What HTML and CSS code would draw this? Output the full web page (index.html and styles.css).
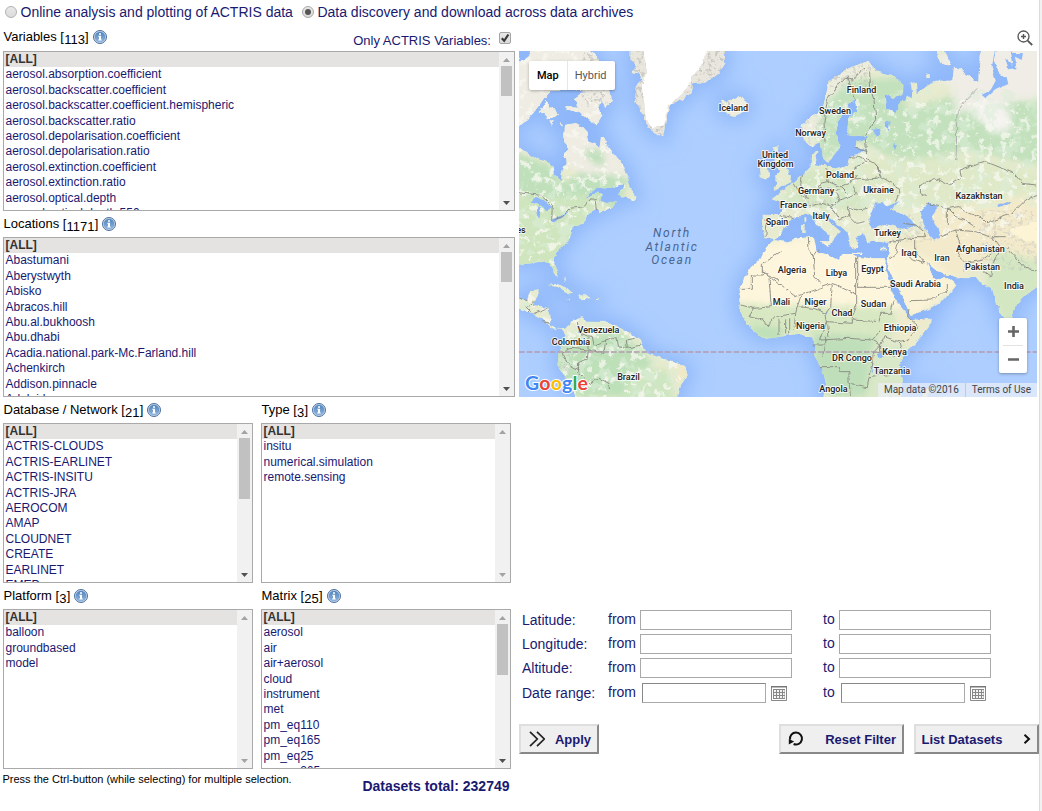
FILE: index.html
```html
<!DOCTYPE html>
<html lang="en">
<head>
<meta charset="utf-8">
<title>ACTRIS Data Portal</title>
<link rel="stylesheet" href="styles.css">
</head>
<body>
<svg class="defs" width="0" height="0" aria-hidden="true">
  <defs>
    <linearGradient id="infoFill" x1="0" y1="0" x2="0" y2="1"><stop offset="0" stop-color="#4f84bd"/><stop offset="1" stop-color="#8fb5df"/></linearGradient>
    <linearGradient id="ctl" x1="0" y1="0" x2="0" y2="1"><stop offset="0" stop-color="#e9e9e9"/><stop offset="1" stop-color="#dadada"/></linearGradient>
    <symbol id="info" viewBox="0 0 14 14">
      <circle cx="7" cy="7" r="6.5" fill="#c7d6e8" stroke="#4b6f9d" stroke-width="1"/>
      <circle cx="7" cy="7" r="5.3" fill="url(#infoFill)"/>
      <path d="M6 3.2h2v1.6H6zM5.3 5.8H8v3.8h.8v1H5.2v-1H6V6.8h-.7z" fill="#fff"/>
    </symbol>
    <symbol id="calendar" viewBox="0 0 16 15">
      <path d="M.5.5h15v14H.5z" fill="#fff" stroke="#888"/>
      <path d="M0 0h16v1.5H0z" fill="#777"/>
      <path d="M2 3h12v10H2z" fill="#888"/>
      <path d="M3 4h2v2H3zm3 0h2v2H6zm3 0h2v2H9zm3 0h1.6v2H12zM3 7h2v2H3zm3 0h2v2H6zm3 0h2v2H9zm3 0h1.6v2H12zM3 10h2v2H3zm3 0h2v2H6zm3 0h2v2H9zm3 0h1.6v2H12z" fill="#f4f4f4"/>
    </symbol>
  </defs>
</svg>
<main class="portal">
  <header class="modes">
    <label class="mode"><svg class="radio" viewBox="0 0 12 12"><circle cx="6" cy="6" r="5.5" fill="url(#ctl)" stroke="#b2b2b2"/></svg>Online analysis and plotting of ACTRIS data</label>
    <label class="mode"><svg class="radio" viewBox="0 0 12 12"><circle cx="6" cy="6" r="5.5" fill="url(#ctl)" stroke="#a8a8a8"/><circle cx="6" cy="6" r="3" fill="#555"/></svg>Data discovery and download across data archives</label>
  </header>

  <div class="columns">
    <div class="filters">
      <section class="filter wide">
        <div class="head first"><h2>Variables [<span class="count">113</span>]</h2><svg class="info"><use href="#info"/></svg>
          <label class="only">Only ACTRIS Variables:<svg class="check" viewBox="0 0 12 12"><rect x=".5" y=".5" width="11" height="11" rx="1.5" fill="url(#ctl)" stroke="#a5a5a5"/><path d="M2.8 6.2l2.4 2.6 4.2-6.3" fill="none" stroke="#3a3a3a" stroke-width="2.2"/></svg></label>
        </div>
        <div class="list">
          <ul><li class="all">[ALL]</li><li>aerosol.absorption.coefficient</li><li>aerosol.backscatter.coefficient</li><li>aerosol.backscatter.coefficient.hemispheric</li><li>aerosol.backscatter.ratio</li><li>aerosol.depolarisation.coefficient</li><li>aerosol.depolarisation.ratio</li><li>aerosol.extinction.coefficient</li><li>aerosol.extinction.ratio</li><li>aerosol.optical.depth</li><li>aerosol.optical.depth.550</li></ul>
          <div class="bar"><i class="up"></i><i class="thumb t30"></i><i class="down on"></i></div>
        </div>
      </section>
      <section class="filter wide">
        <div class="head"><h2>Locations [<span class="count">1171</span>]</h2><svg class="info"><use href="#info"/></svg></div>
        <div class="list">
          <ul><li class="all">[ALL]</li><li>Abastumani</li><li>Aberystwyth</li><li>Abisko</li><li>Abracos.hill</li><li>Abu.al.bukhoosh</li><li>Abu.dhabi</li><li>Acadia.national.park-Mc.Farland.hill</li><li>Achenkirch</li><li>Addison.pinnacle</li><li>Adelaide</li></ul>
          <div class="bar"><i class="up"></i><i class="thumb t30"></i><i class="down on"></i></div>
        </div>
      </section>
      <section class="filter">
        <div class="head"><h2>Database / Network [<span class="count">21</span>]</h2><svg class="info"><use href="#info"/></svg></div>
        <div class="list">
          <ul><li class="all">[ALL]</li><li>ACTRIS-CLOUDS</li><li>ACTRIS-EARLINET</li><li>ACTRIS-INSITU</li><li>ACTRIS-JRA</li><li>AEROCOM</li><li>AMAP</li><li>CLOUDNET</li><li>CREATE</li><li>EARLINET</li><li>EMEP</li></ul>
          <div class="bar"><i class="up"></i><i class="thumb t60"></i><i class="down on"></i></div>
        </div>
      </section>
      <section class="filter">
        <div class="head"><h2>Type [<span class="count">3</span>]</h2><svg class="info"><use href="#info"/></svg></div>
        <div class="list">
          <ul><li class="all">[ALL]</li><li>insitu</li><li>numerical.simulation</li><li>remote.sensing</li></ul>
          <div class="bar"><i class="up"></i><i class="down"></i></div>
        </div>
      </section>
      <section class="filter">
        <div class="head"><h2>Platform [<span class="count">3</span>]</h2><svg class="info"><use href="#info"/></svg></div>
        <div class="list">
          <ul><li class="all">[ALL]</li><li>balloon</li><li>groundbased</li><li>model</li></ul>
          <div class="bar"><i class="up"></i><i class="down"></i></div>
        </div>
      </section>
      <section class="filter">
        <div class="head"><h2>Matrix [<span class="count">25</span>]</h2><svg class="info"><use href="#info"/></svg></div>
        <div class="list">
          <ul><li class="all">[ALL]</li><li>aerosol</li><li>air</li><li>air+aerosol</li><li>cloud</li><li>instrument</li><li>met</li><li>pm_eq110</li><li>pm_eq165</li><li>pm_eq25</li><li>pm_eq265</li></ul>
          <div class="bar"><i class="up"></i><i class="thumb t51"></i><i class="down on"></i></div>
        </div>
      </section>
      <footer class="foot"><p class="hint">Press the Ctrl-button (while selecting) for multiple selection.</p><p class="total">Datasets total: 232749</p></footer>
    </div>

    <div class="side">
      <div class="tools"><svg class="magnify" viewBox="0 0 16 16" fill="none" stroke="#555"><circle cx="6.5" cy="6.5" r="5.5" stroke-width="1.3"/><path d="M10.6 10.6l4.6 4.4" stroke-width="1.8"/><path d="M6.5 4v5M4 6.5h5" stroke-width="1.4"/></svg></div>
      <div class="map">
        <svg class="world" viewBox="0 3 1554 1038">
          <defs>
            <filter id="soft" x="-10%" y="-10%" width="120%" height="120%"><feGaussianBlur stdDeviation="30"/></filter>
            <filter id="blend" x="-20%" y="-20%" width="140%" height="140%"><feGaussianBlur stdDeviation="9"/></filter>
            <filter id="rough" x="-5%" y="-5%" width="110%" height="110%"><feTurbulence type="fractalNoise" baseFrequency=".045" numOctaves="3" seed="4"/><feDisplacementMap in="SourceGraphic" scale="14" xChannelSelector="R" yChannelSelector="G"/></filter>
            <filter id="speck" x="0" y="0" width="100%" height="100%"><feTurbulence type="fractalNoise" baseFrequency=".045" numOctaves="4" seed="11"/><feColorMatrix values="0 0 0 0 .94  0 0 0 0 .95  0 0 0 0 .88  9 0 0 0 -5.1"/></filter>
            <filter id="wood" x="0" y="0" width="100%" height="100%"><feTurbulence type="fractalNoise" baseFrequency=".025" numOctaves="4" seed="7"/><feColorMatrix values="0 0 0 0 .7  0 0 0 0 .85  0 0 0 0 .68  8 0 0 0 -4.2"/></filter>
            <filter id="rock" x="0" y="0" width="100%" height="100%"><feTurbulence type="fractalNoise" baseFrequency=".09" numOctaves="3" seed="3"/><feColorMatrix values="0 0 0 0 .55  0 0 0 0 .54  0 0 0 0 .51  7 0 0 0 -3.7"/></filter>
            <path id="shapes" d="M-20-20H195L235 25 250 50 252 90 275 125 279 155 262 170 248 148 200 125 150 118 100 120 75 145 55 175 22 212-20 245Z
              M165 145L190 128 225 125 250 155 235 172 250 195 232 226 205 207 180 188 140 178 140 168 180 170ZM62 187L80 150 92 174 112 180 120 195 102 202 88 208 75 193ZM92 213l12-3-6 14zM118 220l14 5-8 6z
              M138 225L170 219 190 229 205 245 211 275 226 283 241 297 246 262 255 259 266 290 290 320 315 350 328 380 320 400 290 408 272 413 238 410 212 430 200 447 235 428 248 433 244 455 262 462 290 454 285 468 260 480 240 490 236 475 208 490 200 511 190 521 160 532 155 560 140 580 110 610 105 640 118 670 115 683 104 668 92 640 70 632 40 640-20 645V280L15 300 50 325 90 338 103 350 108 375 125 390 130 362 140 340 135 310 149 300 135 270ZM300 432L325 388 332 412 353 440 347 452 328 445 307 442Z
              M-20 745L25 751 34 721 60 718 50 746 40 768 88 774 95 800 92 826 112 838 142 832 165 811 190 801 198 815 265 816 302 831 360 866 376 901 430 926 498 948 506 976 482 1011 468 1060H172L152 1000 115 945 124 896 143 858 130 839 98 838 70 806 30 786-20 768ZM85 705L115 702 150 716 166 731 140 728 112 710ZM180 733L200 733 215 745 186 748ZM142 746h11v4h-11zM231 744h10v4h-10zM135 685l6 3-2 6z
              M335-10H612L619 40 600 70 560 95 520 100 515 130 490 150 455 160 440 210 432 262 410 250 385 232 375 195 348 150 350 110 370 90 360 70 338 66 352 50 335 30ZM603 180L610 143 622 158 640 150 668 139 688 165 682 184 646 200 620 190Z
              M722 385L720 355 745 345 751 378 735 390ZM764 292L779 288 775 315 792 328 802 355 816 378 812 398 790 410 764 424 775 395 768 377 780 362 768 340Z
              M848 225L880 198 910 180 922 130 930 95 968 65 1010 45 1050 33 1070 64 1120 75 1153 105 1152 132 1122 146 1096 130 1100 172 1130 190 1140 166 1165 137 1182 145 1175 100 1194 95 1196 130 1220 110 1250 92 1300 92 1305 50 1325 60 1378 97 1382 20 1395-20H1580V705L1554 711 1520 736 1490 766 1480 801 1470 846 1450 801 1430 756 1420 718 1390 706 1370 681 1310 682 1280 672 1250 660 1222 637 1242 684 1262 688 1280 680 1312 706 1280 748 1230 776 1175 798 1168 785 1150 741 1130 706 1117 676 1105 650 1112 576 1100 578 1062 572 1045 580 1035 553 1010 560 1018 590 1002 597 988 570 982 545 960 525 928 498 908 492 932 516 966 545 953 555 942 576 930 582 932 556 898 526 872 492 825 503 798 532 790 555 765 570 738 564 730 538 728 494 783 495 790 460 758 448 780 430 825 395 850 375 875 350 876 310 895 305 890 343 950 355 985 345 990 320 1045 300 1010 294 1012 275 1048 262 985 252 988 205 1015 182 1008 152 984 158 990 180 960 205 950 250 965 285 945 312 928 338 912 322 905 276 880 290 855 270Z
              M745 586L765 570 800 575 840 565 885 560 893 605 930 615 960 630 968 612 1000 612 1015 621 1055 625 1100 625 1098 656 1113 706 1130 751 1163 791 1175 811 1238 803 1236 818 1200 866 1155 916 1140 946 1150 1000 1142 1060H910L920 996 910 956 885 916 890 890 880 866 840 851 780 861 740 866 700 841 680 816 660 781 665 746 659 721 690 661 725 626Z
              M905 574h28l-5 17zM1000 608h30v4h-30zM1086 596h16v5h-16zM848 525h12v24h-10zM853 505h6v12h-6zM1465 18l-18 8zM1245-10h26l12 30 15 15-5 13-28-8-8-18zM1222 70h10v14h-10zM1216 1020l12-5-3 26h-12z"/>
            <clipPath id="land"><use href="#shapes"/></clipPath>
          </defs>
          <rect y="0" width="1554" height="1045" fill="#adceff"/>
          <use href="#shapes" filter="url(#soft)" fill="#8db6f9" stroke="#8db6f9" stroke-width="34"/>
          <g filter="url(#rough)">
            <use href="#shapes" fill="#e7ebcf"/>
            <g clip-path="url(#land)">
              <g filter="url(#blend)">
                <path d="M-20-20H290V300L330 380 210 400 130 330-20 290Z" fill="#efece3"/>
                <path d="M-20 300L100 350 130 400 180 370 330 380 300 480 190 440 90 470-20 420ZM190 300L250 300 260 350 220 340Z" fill="#bfe0bb"/>
                <path d="M-20 440L250 440 200 520 110 680-20 650Z" fill="#cfe5be"/>
                <path d="M130 870L300 840 400 930 350 1041 150 1041 110 930Z" fill="#bde0b9"/>
                <path d="M430 930L510 940 500 990 440 1000Z" fill="#f1e8c6"/>
                <path d="M350 950L450 960 470 1060 300 1060Z" fill="#cee6c2"/>
                <path d="M600 130H700V210H600Z" fill="#eeedde"/>
                <path d="M840 220L930 60 1060 20 1070 50 960 120 880 300Z" fill="#ededde"/>
                <path d="M900 180L990 90 1160 80 1160 180 1330 130 1580 160 1580 350 1350 300 1150 340 1020 270 900 340Z" fill="#c2e1bc"/>
                <path d="M1170 50L1380-20H1580V140L1400 170 1310 190 1300 110Z" fill="#efede5"/>
                <path d="M1350 180L1400 140 1470 180 1480 240 1420 250Z" fill="#f4f3ef"/>
                <path d="M1000 330L1350 320 1580 370 1560 450 1300 480 1050 460Z" fill="#dfe9c8"/>
                <path d="M840 360L1000 360 1050 480 900 480 780 460Z" fill="#d5e6c3"/>
                <path d="M1230 480L1580 430 1580 640 1400 640 1300 690 1230 640 1130 570 1250 540Z" fill="#f2eacb"/>
                <path d="M1420 590L1580 640 1580 720 1470 860 1400 700Z" fill="#d4e7c3"/>
                <path d="M1090 560L1250 640 1320 700 1180 810 1100 660Z" fill="#fbf3d7"/>
                <path d="M650 590L880 560 1120 620 1150 780 960 770 650 760Z" fill="#fdf5dc"/>
                <path d="M650 760L1120 770 1140 860 880 850 650 850Z" fill="#d8e8c3"/>
                <path d="M1140 790L1250 800 1170 900 1120 850Z" fill="#eeebcd"/>
                <path d="M880 850L1080 860 1070 960 1040 1041 930 1041 880 920Z" fill="#bfdfba"/>
                <path d="M1060 880L1160 880 1160 1050 1040 1050Z" fill="#d9e8c8"/>
                <path d="M700 820L800 840 780 880 700 860Z" fill="#bfe0b8"/>
              </g>
              <rect y="380" width="620" height="665" filter="url(#wood)" opacity=".6"/>
              <rect x="780" y="120" width="780" height="360" filter="url(#wood)" opacity=".55"/>
              <rect width="600" height="1045" filter="url(#speck)" opacity=".75"/>
              <rect x="780" y="150" width="774" height="420" filter="url(#speck)" opacity=".7"/>
              <path d="M330-10H630V65L520 120 495 155 455 165 440 265 410 255 380 235 330 150Z" fill="#e9e6dd"/>
              <path d="M330-10H630V65L520 120 495 155 455 165 440 265 410 255 380 235 330 150Z" filter="url(#rock)" opacity=".8"/>
              <path d="M370-10H562L552 40 520 80 508 112 480 140 450 165 432 225 397 236 380 200 375 150 368 110 384 60Z" fill="#fff"/>
              <rect x="190" y="3" width="90" height="165" filter="url(#rock)" opacity=".7"/>
              <rect x="915" y="35" width="150" height="75" filter="url(#rock)" opacity=".6"/>
              <rect x="850" y="110" width="70" height="175" filter="url(#rock)" opacity=".35"/>
              <rect x="120" y="850" width="32" height="190" filter="url(#rock)" opacity=".6"/>
              <rect x="1380" y="480" width="174" height="180" filter="url(#rock)" opacity=".45"/>
              <rect x="1120" y="495" width="120" height="80" filter="url(#rock)" opacity=".35"/>
              <rect x="865" y="450" width="85" height="25" filter="url(#rock)" opacity=".5"/>
              <path d="M1470 540L1554 515V580L1500 565Z" fill="#fdf4d5"/>
            </g>
            <g fill="#8fb8fa">
              <path d="M1048 508L1070 458 1090 456 1102 470 1142 453 1112 482 1140 488 1172 505 1192 528 1150 536 1100 522 1060 538Z"/>
              <path d="M1205 482L1232 455 1258 472 1238 500 1255 530 1262 562 1245 572 1225 550 1212 515Z"/>
              <path d="M1430-10H1436L1425 25 1442 78 1462 78 1468 102 1430 120 1400 145 1388 135 1415 120 1430 92 1418 50ZM1458 25L1480 45 1473 8 1512 10 1508 30 1488 20 1492 55 1470 58Z"/>
              <path d="M1062 240L1080 233 1084 250 1070 260ZM1100 215l12 3-2 25-8-8zM1124 278l10 8-6 10-6-8z"/>
              <path d="M50 440L80 455 100 475 85 480 55 460 35 455ZM55 470L65 470 62 505 52 498ZM95 510L130 495 150 485 132 502 102 518ZM200 445l40-35-10 20z"/>
              <path d="M1075 912l14-4 5 14-12 6zM1057 945l6 22-5-5zM1435 465l30-12 10 4-35 14zM918 785l8 2-3 6z"/>
              <path d="M0 0H35L30 18 12 32 0 34Z"/>
            </g>
            <g class="borders">
              <path d="M0 428L65 436 100 468 98 512 130 500 155 475 195 470 215 447 228 447 232 480"/>
              <path d="M918 275L915 215 925 150 955 105 980 85 1000 90 1035 55 1052 65 1055 120 1065 150 1070 205 1055 235 1040 258M984 80L1000 120 1010 155M1040 265L1043 325 1075 345 1083 380 1070 385 1005 390M1010 294L1045 305M990 320L1020 322 1043 335 1005 355M850 375L845 405 860 440M920 355L928 395 965 410 1005 390 1015 375M928 395L905 400 895 415 960 420M825 400L850 440 870 445M870 468L910 460 935 468 960 450 950 430M960 450L990 440 1015 430 1000 405M935 468L960 510 990 500 985 470 1015 480 1045 475M990 500L1010 520 1040 515M785 500L825 505M735 510L745 512 740 560M965 410L985 430M1075 345L1085 380 1145 415 1140 430 1130 455"/>
              <path d="M1220 440L1204 430 1205 405 1250 385 1290 405 1325 385 1320 360 1400 335 1450 355 1480 365 1510 400 1554 405M1225 460L1285 475M1285 525V475L1320 470 1350 490 1390 505 1405 520 1480 490 1520 450 1554 435M1285 475L1310 500 1340 510 1370 530M1260 560L1310 540 1370 545 1410 560M1310 540L1325 590 1320 620 1340 640 1335 665M1340 640L1390 630 1440 590 1420 560 1460 560M1395 665L1415 680 1420 640 1440 605 1470 590M1470 600L1520 655 1554 660M1150 520L1190 525 1215 545 1220 560 1190 560 1190 600 1215 640M1110 576L1140 570 1185 565M1140 572L1130 610 1110 625M1150 598L1180 630 1215 640M1172 752L1240 750 1255 735 1285 720 1285 705"/>
              <path d="M1315 185C1310 240 1315 290 1310 330M1315 185L1340 150 1375 115" stroke="#aaa"/>
              <path d="M665 718H697V675H730V665L830 740 940 700 955 705 1010 732V622M730 665V640L785 605M730 665L780 690M750 685L757 770 705 775M1016 621V712H1120M883 620L887 680 905 700M868 560L870 600 883 620 900 598M940 700L935 770 920 790M1010 732V775L1000 800M665 765L705 775 690 800 730 810 745 830 770 800 830 790 835 770 885 775 920 790 925 815 1000 820 1000 800M835 770L845 740M780 805V855M800 805V850M812 805V850M830 790L825 840M925 815L905 870 990 865 1060 870 1085 840M1000 810L1080 815 1085 790 1115 790 1125 750M925 815L930 860M1060 870L1085 885 1095 860 1140 875 1165 870 1200 830 1165 800 1170 780M1140 875L1150 915M1085 885V905M1060 905H1085M1058 940L1065 905 1085 885M1085 905L1130 920M900 950H960L965 965H990V1000L1045 1010 1050 980 1085 975M1060 935L1050 975M990 1000L995 1041M1075 960L1100 975 1145 970M880 885H920V860M920 885L910 920"/>
              <path d="M175 815L180 850 220 860 225 885 260 870 255 910 210 900V860M260 870L290 860 295 890 325 895 322 870 350 865M325 895L365 885M208 900L205 925 175 940 180 960 145 940 130 910 155 895 208 900M175 940L180 970 215 1000 240 985 270 1000 275 1020M0 745L25 752M25 770L45 755M45 790L85 775M70 815L92 820M20 770L35 785"/>
            </g>
          </g>
          <path d="M0 906H1554" stroke="#b49bb0" stroke-width="4.5" stroke-dasharray="17 6"/>
        </svg>
        <svg class="names" viewBox="519 51 518 346">
          <text x="733.5" y="110.5">Iceland</text><text x="861.5" y="92.5">Finland</text><text x="835" y="113.5">Sweden</text><text x="810.5" y="135.5">Norway</text><text x="775" y="157.5">United</text><text x="775.5" y="166.5">Kingdom</text><text x="840" y="177.5">Poland</text><text x="816" y="193.5">Germany</text><text x="878.5" y="192.5">Ukraine</text><text x="979" y="198.5">Kazakhstan</text><text x="793.5" y="207.5">France</text><text x="821" y="218.5">Italy</text><text x="777" y="224.5">Spain</text><text x="887.5" y="235.5">Turkey</text><text x="909" y="255.5">Iraq</text><text x="942" y="260.5">Iran</text><text x="980.5" y="251.5">Afghanistan</text><text x="982.5" y="269.5">Pakistan</text><text x="1014" y="288.5">India</text><text x="915.5" y="286.5">Saudi Arabia</text><text x="872.5" y="271.5">Egypt</text><text x="836.5" y="275.5">Libya</text><text x="792" y="272.5">Algeria</text><text x="781.5" y="304.5">Mali</text><text x="815.5" y="304.5">Niger</text><text x="873.5" y="306.5">Sudan</text><text x="842" y="315.5">Chad</text><text x="810.5" y="328.5">Nigeria</text><text x="900" y="330.5">Ethiopia</text><text x="894.5" y="354.5">Kenya</text><text x="852" y="360.5">DR Congo</text><text x="892" y="373.5">Tanzania</text><text x="833.5" y="391.5">Angola</text><text x="598.5" y="332.5">Venezuela</text><text x="571" y="344.5">Colombia</text><text x="628.5" y="379.5">Brazil</text><text x="521" y="232.5">es</text>
          <g class="sea"><text x="672" y="237">North</text><text x="672" y="251">Atlantic</text><text x="672" y="264">Ocean</text></g>
        </svg>
        <div class="types"><span class="picked">Map</span><span>Hybrid</span></div>
        <div class="zoomer"><svg viewBox="0 0 28 55"><path d="M9 13.5h11M14.5 8v11M9 41.5h11" stroke="#666" stroke-width="2.6"/><path d="M4 27.5h20" stroke="#e2e2e2"/></svg></div>
        <div class="brand"><span class="b">G</span><span class="r">o</span><span class="y">o</span><span class="b">g</span><span class="g">l</span><span class="r">e</span></div>
        <div class="credit"><span>Map data ©2016</span><span>Terms of Use</span></div>
      </div>

      <form class="ranges">
        <div class="row"><span class="name">Latitude:</span><span class="from">from</span><input><span class="to">to</span><input></div>
        <div class="row"><span class="name">Longitude:</span><span class="from">from</span><input><span class="to">to</span><input></div>
        <div class="row"><span class="name">Altitude:</span><span class="from">from</span><input><span class="to">to</span><input></div>
        <div class="row dates"><span class="name">Date range:</span><span class="from">from</span><span class="pick"><input><svg><use href="#calendar"/></svg></span><span class="to">to</span><span class="pick"><input><svg><use href="#calendar"/></svg></span></div>
      </form>
      <div class="actions">
        <button class="apply"><svg viewBox="0 0 16 16" width="16" height="16"><path d="M1 .8l7.3 7.2L1 15.2M8 .8l7.3 7.2L8 15.2" fill="none" stroke="#222" stroke-width="1.7"/></svg>Apply</button>
        <button class="reset"><svg viewBox="0 0 16 16" width="16" height="16"><path d="M2.1 8.6A6 6 0 1 1 5.6 13" fill="none" stroke="#111" stroke-width="2"/><path d="M.8 8V13.6L6.2 10.6Z" fill="#111"/></svg>Reset Filter</button>
        <button class="datasets">List Datasets<svg viewBox="0 0 8 10" width="8" height="10"><path d="M1.5.8L6 5 1.5 9.2" fill="none" stroke="#111" stroke-width="2"/></svg></button>
      </div>
    </div>
  </div>
</main>
</body>
</html>
```

FILE: styles.css
```css
* { box-sizing: border-box; }
body { margin: 0; background: #f1f1f1; font-family: "Liberation Sans", Arial, sans-serif; color: #191970; overflow: hidden; }
.defs { display: block; height: 0; }
.portal { width: 1040px; height: 811px; background: #fff; border-right: 1px solid #dcdcdc; }
h2, p, ul { margin: 0; padding: 0; list-style: none; font-weight: normal; }
.modes { display: flex; gap: 9px; height: 24px; margin-bottom: 1px; padding-left: 5px; font-size: 14px; }
.mode { display: flex; align-items: center; gap: 3.5px; white-space: nowrap; }
.radio { width: 12px; height: 12px; }
.columns { display: flex; }
.filters { width: 519px; padding-left: 3px; display: grid; grid-template-columns: 250px 250px; column-gap: 8px; align-content: start; }
.filter { display: flex; flex-direction: column; }
.wide { grid-column: 1 / 3; width: 512px; }
.head { display: flex; height: 26px; align-items: flex-start; gap: 4px; padding-top: 5px; color: #000; }
.head.first { padding-top: 4px; }
.head h2 { font-size: 13px; line-height: 16px; white-space: nowrap; padding-left: .5px; }
.count { vertical-align: -3px; line-height: 0; margin: 0 .2px; }
.info { width: 14px; height: 14px; margin-top: 1px; }
.only { margin-left: auto; display: flex; gap: 8px; font-size: 13px; line-height: 16px; color: #191970; padding: 4px 4px 0 0; }
.check { width: 12px; height: 12px; margin-top: -1px; }
.list { height: 160px; border: 1px solid #a9a9a9; display: flex; overflow: hidden; background: #fff; }
.list ul { flex: 1; font-size: 12px; overflow: hidden; }
.list li { height: 15.4px; line-height: 14px; padding-left: 1.5px; white-space: nowrap; }
.list .all { background: #e4e3e1; color: #333; font-weight: bold; }
.bar { width: 15px; background: #f1f1f1; display: flex; flex-direction: column; align-items: center; }
.up, .down { width: 7px; height: 4px; background: #a3a3a3; flex: none; }
.up { margin: 6px 0 4px; clip-path: polygon(50% 0, 100% 100%, 0 100%); }
.down { margin: auto 0 5px; clip-path: polygon(0 0, 100% 0, 50% 100%); }
.down.on { background: #505050; }
.thumb { width: 11px; background: #c1c1c1; }
.t30 { height: 30px; }
.t60 { height: 61px; }
.t51 { height: 51px; }
.foot { grid-column: 1 / 3; display: flex; justify-content: space-between; padding-right: 1.5px; }
.hint { font-size: 11px; line-height: 13px; padding-top: 4px; color: #000; margin-left: -.5px; }
.total { font-size: 14px; line-height: 16px; padding-top: 9px; font-weight: bold; }
.side { width: 520px; flex: none; }
.tools { height: 26px; display: flex; justify-content: flex-end; padding: 5px 6px 0 0; }
.magnify { width: 16px; height: 16px; }
.map { position: relative; width: 518px; height: 346px; overflow: hidden; font-family: Roboto, sans-serif; }
.world, .names { position: absolute; left: 0; top: 0; width: 518px; height: 346px; }
.borders { fill: none; stroke: #898980; stroke-width: 2.7; stroke-linejoin: round; }
.names { font-size: 9px; font-weight: 500; text-anchor: middle; fill: #222; stroke: #fff; stroke-width: 2px; stroke-opacity: .8; paint-order: stroke; stroke-linejoin: round; }
.sea { font-size: 12px; font-style: italic; font-weight: 400; letter-spacing: 1.7px; fill: #49658f; stroke: none; }
.types { position: absolute; left: 10px; top: 10px; height: 29px; display: flex; align-items: center; background: #fff; border-radius: 2px; box-shadow: 0 1px 3px rgba(0,0,0,.3); font-size: 11px; color: #565656; }
.types span { padding: 0 8px; line-height: 29px; }
.types span + span { padding-left: 7px; }
.types .picked { color: #000; font-weight: 500; border-right: 1px solid #e6e6e6; }
.zoomer { position: absolute; left: 480px; top: 267px; width: 28px; height: 55px; background: #fff; border-radius: 2px; box-shadow: 0 1px 3px rgba(0,0,0,.3); }
.zoomer svg { display: block; width: 28px; height: 55px; }
.brand { position: absolute; left: 6px; top: 321px; font: 700 19.5px/22px Lato, sans-serif; letter-spacing: .2px; -webkit-text-stroke: 2px #fff; paint-order: stroke; }
.b { color: #4285f4; } .r { color: #ea4335; } .y { color: #fbbc05; } .g { color: #34a853; }
.credit { position: absolute; right: 0; bottom: 0; height: 14px; display: flex; background: rgba(236,240,247,.72); font-size: 10px; line-height: 14px; color: #444; white-space: nowrap; }
.credit span { padding: 0 6px; }
.credit span + span { border-left: 1px solid #b7cbec; }
.ranges { padding-top: 213px; font-size: 14px; }
.row { display: flex; height: 24px; line-height: 18px; padding-left: 3px; }
.name { width: 86px; padding-top: 1px; }
.from { width: 32px; }
.to { width: 47px; padding-left: 31px; }
.row input { width: 152px; height: 20px; border: 1px solid #a9a9a9; padding: 0; background: #fff; }
.dates { padding-top: 1px; }
.pick { display: flex; width: 152px; padding-left: 2px; gap: 5px; }
.pick input { width: 124px; border-color: #888 #aaa #aaa #888; }
.pick svg { width: 16px; height: 15px; margin-top: 3px; }
.actions { display: flex; padding-top: 18px; }
.actions button { height: 30px; border: 2px solid; border-color: #dedede #888 #888 #dedede; background: #efefef; display: flex; align-items: center; justify-content: space-between; padding: 0 6px 0 8px; font: bold 13px "Liberation Sans", Arial, sans-serif; color: #191970; }
.actions .apply { width: 80px; }
.actions .reset { width: 125px; margin-left: 180px; padding-left: 7px; }
.actions .datasets { width: 125px; margin-left: 10px; padding: 0 6px 0 5.5px; }
```
